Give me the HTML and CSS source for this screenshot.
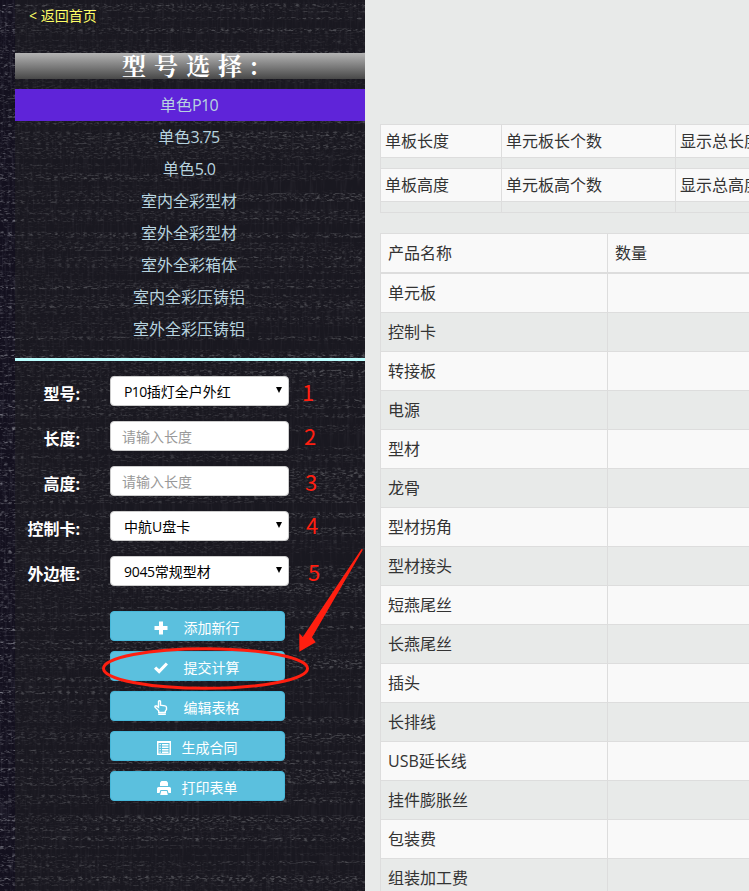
FILE: index.html
```
<!DOCTYPE html>
<html lang="zh-CN">
<head>
<meta charset="utf-8">
<title>型号选择</title>
<link rel="stylesheet" href="styles.css">
</head>
<body>
<div class="page">
  <aside class="sidebar">
    <svg class="texture" width="365" height="891" aria-hidden="true">
      <defs>
        <filter id="weft" x="0" y="0" width="100%" height="100%" color-interpolation-filters="sRGB">
          <feTurbulence type="fractalNoise" baseFrequency="0.24 0.6" numOctaves="2" seed="4" result="n1"/>
          <feColorMatrix in="n1" values="0 0 0 0 .46  0 0 0 0 .46  0 0 0 0 .5  4 0 0 0 -1.9" result="fine"/>
          <feTurbulence type="fractalNoise" baseFrequency="0.0015 0.22" numOctaves="2" seed="9" result="n2"/>
          <feColorMatrix in="n2" values="0 0 0 0 1  0 0 0 0 1  0 0 0 0 1  3 0 0 0 -1.15" result="bands"/>
          <feComposite in="fine" in2="bands" operator="in"/>
        </filter>
        <filter id="warp" x="0" y="0" width="100%" height="100%" color-interpolation-filters="sRGB">
          <feTurbulence type="fractalNoise" baseFrequency="0.4 0.04" numOctaves="2" seed="12"/>
          <feColorMatrix values="0 0 0 0 .4  0 0 0 0 .4  0 0 0 0 .46  1.8 0 0 0 -.85"/>
        </filter>
      </defs>
      <rect width="365" height="891" filter="url(#warp)" opacity=".3"/>
      <rect width="365" height="891" filter="url(#weft)"/>
    </svg>
    <div class="panel">
      <a class="back">&lt; 返回首页</a>
      <h1 class="title">型号选择:</h1>
      <ul class="models">
        <li class="active">单色<span class="latin">P10</span></li>
        <li>单色<span class="latin">3.75</span></li>
        <li>单色<span class="latin">5.0</span></li>
        <li>室内全彩型材</li>
        <li>室外全彩型材</li>
        <li>室外全彩箱体</li>
        <li>室内全彩压铸铝</li>
        <li>室外全彩压铸铝</li>
      </ul>
      <div class="form">
        <div class="field"><label>型号:</label><div class="control select"><span><span class="latin">P10</span>插灯全户外红</span><i class="caret"></i></div></div>
        <div class="field"><label>长度:</label><div class="control placeholder">请输入长度</div></div>
        <div class="field"><label>高度:</label><div class="control placeholder">请输入长度</div></div>
        <div class="field"><label>控制卡:</label><div class="control select"><span>中航U盘卡</span><i class="caret"></i></div></div>
        <div class="field"><label>外边框:</label><div class="control select"><span><span class="latin wide">9045</span>常规型材</span><i class="caret"></i></div></div>
      </div>
      <div class="actions">
        <div class="btn"><svg width="14" height="14" viewBox="0 0 14 14"><path d="M5 .5h4V5h4.500v4H9v4.500H5V9H.5V5H5z"/></svg>添加新行</div>
        <div class="btn"><svg width="14" height="14" viewBox="0 0 14 14"><path d="M0 7.800 2.200 5.400 5.200 8.200 11.800 1.400 14 3.400 5.200 12.800z"/></svg>提交计算</div>
        <div class="btn"><svg width="14" height="16" viewBox="0 0 14 16"><path class="line" d="M4.700 10.700 1 7.200q-.4-.9.500-1.200h1.200l1.800 1.300V1.500q.2-.8 1-.8t1 .8v3.600l4.500.8q1.500.3 1.500 1.500v2.200l-1.200 1.600v1.200H4.700z"/><path d="M4.200 13.300h7.600V15H4.200z"/></svg>编辑表格</div>
        <div class="btn near"><svg width="14" height="14" viewBox="0 0 14 14"><path fill-rule="evenodd" d="M0 0h14v14H0zM1.500 2v10.500h11V2z"/><path d="M2.500 3h1.300v1.300H2.500zM2.500 5.500h1.300v1.300H2.500zM2.500 8h1.300v1.300H2.500zM2.500 10.500h1.300v1.300H2.500zM5 3h6.500v1.500H5zM5 5.500h6.500V7H5zM5 8h6.500v1.500H5zM5 10.500h6.500V12H5z"/></svg>生成合同</div>
        <div class="btn near"><svg width="14" height="14" viewBox="0 0 14 14"><path d="M4.500 0h5l1.500 1.500V5H3V1.500z"/><path d="M1.500 6h11q1.500 0 1.500 1.500V12h-2.500L10.500 9h-7l-1 3H0V7.500Q0 6 1.500 6z"/><path d="M4.200 10h5.600l1 4H3.200z"/></svg>打印表单</div>
      </div>
    </div>
    <svg class="marks" width="365" height="891" viewBox="0 0 365 891">
      <g class="numbers">
        <text x="302" y="401">1</text>
        <text x="304" y="445">2</text>
        <text x="305" y="491">3</text>
        <text x="306" y="534">4</text>
        <text x="308" y="581">5</text>
      </g>
      <ellipse cx="205.500" cy="668.500" rx="102" ry="19.800"/>
      <path class="arrow" d="M361.500 549 302.800 637 299.300 633.300V651.700L315.700 642.300 312 637.300 363 549.500z"/>
    </svg>
  </aside>
  <main class="content">
    <div class="sizes">
      <div>单板长度</div><div>单元板长个数</div><div>显示总长度</div>
      <div class="gap"></div><div class="gap"></div><div class="gap"></div>
      <div>单板高度</div><div>单元板高个数</div><div>显示总高度</div>
      <div class="gap"></div><div class="gap"></div><div class="gap"></div>
    </div>
    <div class="products">
      <div class="row head"><div>产品名称</div><div>数量</div></div>
      <div class="row"><div>单元板</div><div></div></div>
      <div class="row"><div>控制卡</div><div></div></div>
      <div class="row"><div>转接板</div><div></div></div>
      <div class="row"><div>电源</div><div></div></div>
      <div class="row"><div>型材</div><div></div></div>
      <div class="row"><div>龙骨</div><div></div></div>
      <div class="row"><div>型材拐角</div><div></div></div>
      <div class="row"><div>型材接头</div><div></div></div>
      <div class="row"><div>短燕尾丝</div><div></div></div>
      <div class="row"><div>长燕尾丝</div><div></div></div>
      <div class="row"><div>插头</div><div></div></div>
      <div class="row"><div>长排线</div><div></div></div>
      <div class="row"><div>USB延长线</div><div></div></div>
      <div class="row"><div>挂件膨胀丝</div><div></div></div>
      <div class="row"><div>包装费</div><div></div></div>
      <div class="row"><div>组装加工费</div><div></div></div>
    </div>
  </main>
</div>
</body>
</html>
```
FILE: styles.css
```
* { box-sizing: border-box; }
body {
  margin: 0;
  font: 16px/32px "Open Sans", "Noto Sans CJK SC", sans-serif;
  color: #333;
}
.page { display: flex; height: 891px; overflow: hidden; background: #e8eae9; }
.latin { letter-spacing: -0.6px; }
.latin.wide { letter-spacing: -0.3px; }

.sidebar {
  position: relative;
  flex: 0 0 365px;
  padding-left: 15px;
  background: #13101e;
}
.texture, .marks { position: absolute; top: 0; left: 0; }
.panel {
  position: relative;
  display: flex;
  flex-direction: column;
  height: 891px;
  background: rgba(32, 32, 34, 0.5);
}
.back {
  height: 53px;
  padding-left: 14px;
  font-size: 14px;
  color: #ff6;
}
.title {
  height: 26px;
  margin: 0 0 10px;
  padding-left: 8px;
  background: linear-gradient(#b4b4b4, #484848);
  color: #fff;
  font: bold 24px/24px "Noto Serif CJK SC", "Noto Sans CJK SC", serif;
  letter-spacing: 8px;
  text-align: center;
}
.models {
  height: 269px;
  margin: 0;
  padding: 0 2px 0 0;
  list-style: none;
  text-align: center;
  color: #b7d3df;
}
.models .active { margin-right: -2px; padding-right: 2px; background: #5f24d9; }
.form {
  display: flex;
  flex-direction: column;
  gap: 15px;
  padding-top: 15px;
  border-top: 3px solid #bff;
}
.field { display: flex; height: 30px; }
.field label {
  width: 65px;
  margin-right: 30px;
  padding-top: 2px;
  text-align: right;
  font-weight: bold;
  color: #fff;
}
.control {
  display: flex;
  align-items: center;
  width: 179px;
  height: 30px;
  padding: 1px 0 0 11px;
  border: 1px solid #ccc;
  border-radius: 4px;
  background: #fff;
  color: #000;
  font-size: 14px;
}
.placeholder { color: #999; }
.select { justify-content: space-between; padding: 1px 6px 0 13px; }
.caret {
  margin-top: -3px;
  border: solid transparent;
  border-width: 6px 3px 0;
  border-top-color: #000;
}
.actions {
  display: flex;
  flex-direction: column;
  gap: 10px;
  padding: 25px 0 0 95px;
}
.btn {
  display: flex;
  align-items: center;
  justify-content: center;
  gap: 16px;
  width: 175px;
  height: 30px;
  padding: 3px 2px 0 0;
  border: 1px solid #46b8da;
  border-radius: 4px;
  background: #5bc0de;
  color: #fff;
  font-size: 14px;
}
.btn.near { gap: 11px; padding-right: 1px; }
.btn svg { fill: #fff; }
.btn .line { fill: none; stroke: #fff; stroke-width: 1.4; }

.marks ellipse { fill: none; stroke: #ff1f10; stroke-width: 3; }
.marks .arrow { fill: #ff1f10; }
.numbers { fill: #ff1f10; font: 22px "Noto Sans CJK SC", sans-serif; }

.content { flex: 1; min-width: 0; padding: 124px 0 0 15px; }
.sizes {
  display: grid;
  grid-template-columns: 121px 174px 174px;
  grid-template-rows: 33px 11px 33px 11px;
  margin-bottom: 20px;
  border-bottom: 1px solid #ddd;
}
.sizes div {
  padding-left: 4px;
  border: solid #ddd;
  border-width: 1px 0 0 1px;
  background: #f9f9f9;
}
.sizes .gap { background: none; }
.row { display: grid; grid-template-columns: 227px 1fr; height: 39px; }
.row div {
  padding: 3px 0 0 7px;
  border: solid #ddd;
  border-width: 1px 0 0 1px;
}
.row:nth-child(even) div { background: #f9f9f9; }
.row.head { height: 40px; }
.head div { background: #f9f9f9; border-bottom-width: 1px; }
```
